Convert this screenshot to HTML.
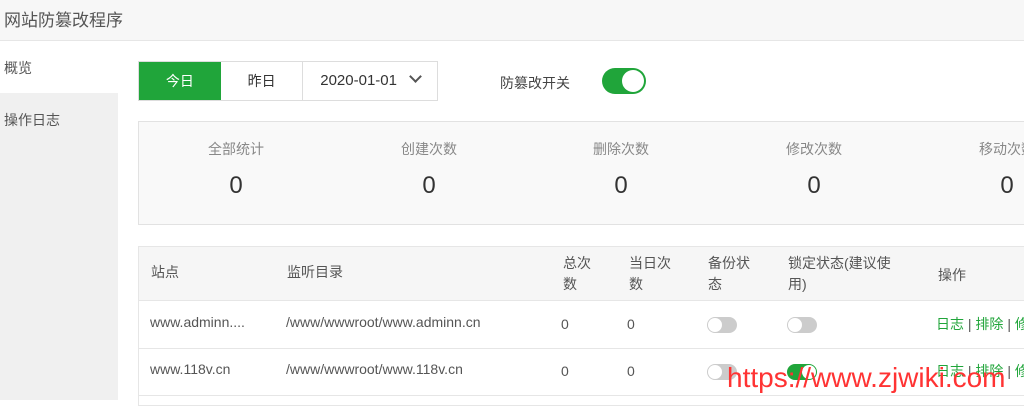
<!DOCTYPE html>
<html><head><meta charset="utf-8"><style>
*{margin:0;padding:0;box-sizing:border-box}
body{width:1024px;height:400px;overflow:hidden;background:#fff;font-family:"Liberation Sans","Noto Sans CJK SC",sans-serif;color:#555;font-size:14px;position:relative}
.hdr{position:absolute;left:0;top:0;width:1024px;height:41px;background:#f7f7f7;border-bottom:1px solid #e6e6e6;font-size:17px;color:#555;padding:6px 0 0 4px}
.side{position:absolute;left:0;top:41px;width:118px;height:359px;background:#f0f0f0}
.side div{height:52px;padding:17px 0 0 4px;font-size:14px;color:#555}
.side .on{background:#fff}
.a{position:absolute}
.btns{left:138px;top:61px;height:40px;width:300px;border:1px solid #ddd;display:flex}
.btns div{height:38px;line-height:38px;text-align:center}
.tog{border-radius:13px}
.stats{left:138px;top:121px;width:900px;height:104px;background:#f9f9f9;border:1px solid #e2e2e2}
.st{position:absolute;width:120px;text-align:center}
.tbl{left:138px;top:246px;width:900px;height:160px;border:1px solid #e6e6e6}
.th{position:absolute;left:0;top:0;width:900px;height:54px;background:#f6f6f6;border-bottom:1px solid #e6e6e6}
.t{position:absolute;font-size:14px;color:#555;line-height:21px}
.sw{position:absolute;width:30px;height:16px;border-radius:8px;background:#ccc}
.sw::after{content:"";position:absolute;left:1px;top:1px;width:14px;height:14px;border-radius:50%;background:#fff}
.sw.g{background:#20a53a}.sw.g::after{left:15px}
.gr{color:#20a53a}
</style></head><body>
<div class="hdr">网站防篡改程序</div>
<div class="side"><div class="on">概览</div><div>操作日志</div></div>
<div class="a btns"><div style="width:82px;background:#20a53a;color:#fff">今日</div><div style="width:83px;border-right:1px solid #ddd;color:#333">昨日</div><div style="width:134px;color:#333;font-size:15px">2020-01-01 <span style="display:inline-block;width:9px;height:9px;border-right:2px solid #555;border-bottom:2px solid #555;transform:rotate(45deg);margin:0 0 4px 10px"></span></div></div>
<div class="a" style="left:500px;top:73px;color:#444">防篡改开关</div>
<div class="a tog" style="left:602px;top:68px;width:44px;height:26px;background:#20a53a"><div style="position:absolute;left:20px;top:2px;width:22px;height:22px;border-radius:50%;background:#fff"></div></div>
<div class="a stats">
<div class="st" style="left:37px;top:17px;color:#888">全部统计</div><div class="st" style="left:37px;top:50px;font-size:24px;color:#333">0</div>
<div class="st" style="left:230px;top:17px;color:#888">创建次数</div><div class="st" style="left:230px;top:50px;font-size:24px;color:#333">0</div>
<div class="st" style="left:422px;top:17px;color:#888">删除次数</div><div class="st" style="left:422px;top:50px;font-size:24px;color:#333">0</div>
<div class="st" style="left:615px;top:17px;color:#888">修改次数</div><div class="st" style="left:615px;top:50px;font-size:24px;color:#333">0</div>
<div class="st" style="left:808px;top:17px;color:#888">移动次数</div><div class="st" style="left:808px;top:50px;font-size:24px;color:#333">0</div>
</div>
<div class="a tbl">
<div class="th"></div>
<div class="t" style="left:12px;top:15px">站点</div>
<div class="t" style="left:148px;top:15px">监听目录</div>
<div class="t" style="left:424px;top:6px;width:36px">总次数</div>
<div class="t" style="left:490px;top:6px;width:46px">当日次数</div>
<div class="t" style="left:569px;top:6px;width:46px">备份状态</div>
<div class="t" style="left:649px;top:6px;width:120px">锁定状态(建议使用)</div>
<div class="t" style="left:799px;top:18px">操作</div>
<div style="position:absolute;left:0;top:101px;width:900px;border-top:1px solid #e6e6e6"></div>
<div style="position:absolute;left:0;top:148px;width:900px;border-top:1px solid #e6e6e6"></div>
<div class="t" style="left:11px;top:65px">www.adminn....</div>
<div class="t" style="left:147px;top:65px">/www/wwwroot/www.adminn.cn</div>
<div class="t" style="left:422px;top:67px">0</div><div class="t" style="left:488px;top:67px">0</div>
<div class="sw" style="left:568px;top:70px"></div><div class="sw" style="left:648px;top:70px"></div>
<div class="t gr" style="left:797px;top:67px">日志 <span style="color:#555">|</span> 排除 <span style="color:#555">|</span> 修</div>
<div class="t" style="left:11px;top:112px">www.118v.cn</div>
<div class="t" style="left:147px;top:112px">/www/wwwroot/www.118v.cn</div>
<div class="t" style="left:422px;top:114px">0</div><div class="t" style="left:488px;top:114px">0</div>
<div class="sw" style="left:568px;top:117px"></div><div class="sw g" style="left:648px;top:117px"></div>
<div class="t gr" style="left:797px;top:114px">日志 <span style="color:#555">|</span> 排除 <span style="color:#555">|</span> 修</div>
</div>
<div class="a" style="left:727px;top:362px;font-size:28px;line-height:32px;color:#f33;font-family:'Liberation Sans',sans-serif;white-space:nowrap">https://www.zjwiki.com</div>
</body></html>
